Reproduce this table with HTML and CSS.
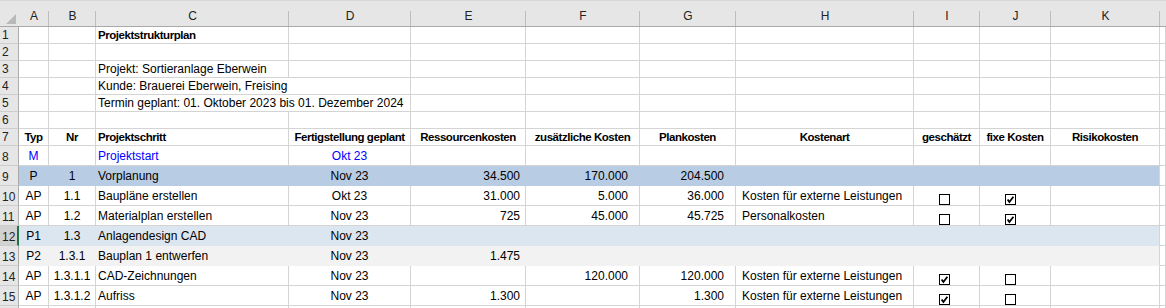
FILE: index.html
```html
<!DOCTYPE html>
<html lang="de">
<head>
<meta charset="utf-8">
<title>Projektstrukturplan</title>
<link rel="stylesheet" href="styles.css">
</head>
<body>
<div class="sheet">
  <div class="row hdr">
    <div class="corner"><svg width="18" height="25" viewBox="0 0 18 25"><polygon points="16,13 16,23 6,23" fill="#b9b9b9"/></svg></div>
    <div class="ch">A</div><div class="ch">B</div><div class="ch">C</div><div class="ch">D</div><div class="ch">E</div><div class="ch">F</div><div class="ch">G</div><div class="ch">H</div><div class="ch">I</div><div class="ch">J</div><div class="ch">K</div><div class="ch last"></div>
  </div>

  <div class="row r17">
    <div class="rh">1</div><div class="c"></div><div class="c"></div><div class="c l b">Projektstrukturplan</div><div class="c"></div><div class="c"></div><div class="c"></div><div class="c"></div><div class="c"></div><div class="c"></div><div class="c"></div><div class="c"></div><div class="c"></div>
  </div>
  <div class="row r17">
    <div class="rh">2</div><div class="c"></div><div class="c"></div><div class="c"></div><div class="c"></div><div class="c"></div><div class="c"></div><div class="c"></div><div class="c"></div><div class="c"></div><div class="c"></div><div class="c"></div><div class="c"></div>
  </div>
  <div class="row r17">
    <div class="rh">3</div><div class="c"></div><div class="c"></div><div class="c l">Projekt: Sortieranlage Eberwein</div><div class="c"></div><div class="c"></div><div class="c"></div><div class="c"></div><div class="c"></div><div class="c"></div><div class="c"></div><div class="c"></div><div class="c"></div>
  </div>
  <div class="row r17">
    <div class="rh">4</div><div class="c"></div><div class="c"></div><div class="c l span2">Kunde: Brauerei Eberwein, Freising</div><div class="c"></div><div class="c"></div><div class="c"></div><div class="c"></div><div class="c"></div><div class="c"></div><div class="c"></div><div class="c"></div>
  </div>
  <div class="row r17">
    <div class="rh">5</div><div class="c"></div><div class="c"></div><div class="c l span2">Termin geplant: 01. Oktober 2023 bis 01. Dezember 2024</div><div class="c"></div><div class="c"></div><div class="c"></div><div class="c"></div><div class="c"></div><div class="c"></div><div class="c"></div><div class="c"></div>
  </div>
  <div class="row r17">
    <div class="rh">6</div><div class="c"></div><div class="c"></div><div class="c"></div><div class="c"></div><div class="c"></div><div class="c"></div><div class="c"></div><div class="c"></div><div class="c"></div><div class="c"></div><div class="c"></div><div class="c"></div>
  </div>
  <div class="row r17 bold">
    <div class="rh">7</div><div class="c m">Typ</div><div class="c m">Nr</div><div class="c l">Projektschritt</div><div class="c m">Fertigstellung geplant</div><div class="c m">Ressourcenkosten</div><div class="c m">zusätzliche Kosten</div><div class="c m">Plankosten</div><div class="c m">Kostenart</div><div class="c m">geschätzt</div><div class="c m">fixe Kosten</div><div class="c m">Risikokosten</div><div class="c"></div>
  </div>

  <div class="row r20 blue">
    <div class="rh">8</div><div class="c m">M</div><div class="c m"></div><div class="c l">Projektstart</div><div class="c m">Okt 23</div><div class="c"></div><div class="c"></div><div class="c"></div><div class="c"></div><div class="c"></div><div class="c"></div><div class="c"></div><div class="c"></div>
  </div>
  <div class="row r20 fill-p">
    <div class="rh">9</div><div class="c m">P</div><div class="c m">1</div><div class="c l">Vorplanung</div><div class="c m">Nov 23</div><div class="c re">34.500</div><div class="c rf">170.000</div><div class="c rf">204.500</div><div class="c"></div><div class="c"></div><div class="c"></div><div class="c k"></div><div class="c plain"></div>
  </div>
  <div class="row r20">
    <div class="rh">10</div><div class="c m">AP</div><div class="c m">1.1</div><div class="c l">Baupläne erstellen</div><div class="c m">Okt 23</div><div class="c re">31.000</div><div class="c rf">5.000</div><div class="c rf">36.000</div><div class="c h">Kosten für externe Leistungen</div>
    <div class="c cb"><span class="box"></span></div>
    <div class="c cb"><span class="box"><svg width="9" height="9" viewBox="0 0 9 9"><path d="M1.6 4.4 L3.4 7 L7.4 1.8" fill="none" stroke="#000" stroke-width="1.8"/></svg></span></div>
    <div class="c"></div><div class="c"></div>
  </div>
  <div class="row r20">
    <div class="rh">11</div><div class="c m">AP</div><div class="c m">1.2</div><div class="c l">Materialplan erstellen</div><div class="c m">Nov 23</div><div class="c re">725</div><div class="c rf">45.000</div><div class="c rf">45.725</div><div class="c h">Personalkosten</div>
    <div class="c cb"><span class="box"></span></div>
    <div class="c cb"><span class="box"><svg width="9" height="9" viewBox="0 0 9 9"><path d="M1.6 4.4 L3.4 7 L7.4 1.8" fill="none" stroke="#000" stroke-width="1.8"/></svg></span></div>
    <div class="c"></div><div class="c"></div>
  </div>
  <div class="row r20 fill-p1">
    <div class="rh sel">12</div><div class="c m">P1</div><div class="c m">1.3</div><div class="c l">Anlagendesign CAD</div><div class="c m">Nov 23</div><div class="c"></div><div class="c"></div><div class="c"></div><div class="c"></div><div class="c"></div><div class="c"></div><div class="c k"></div><div class="c plain"></div>
  </div>
  <div class="row r20 fill-p2">
    <div class="rh">13</div><div class="c m">P2</div><div class="c m">1.3.1</div><div class="c l">Bauplan 1 entwerfen</div><div class="c m">Nov 23</div><div class="c re">1.475</div><div class="c"></div><div class="c"></div><div class="c"></div><div class="c"></div><div class="c"></div><div class="c k"></div><div class="c plain"></div>
  </div>
  <div class="row r20">
    <div class="rh">14</div><div class="c m">AP</div><div class="c m">1.3.1.1</div><div class="c l">CAD-Zeichnungen</div><div class="c m">Nov 23</div><div class="c re"></div><div class="c rf">120.000</div><div class="c rf">120.000</div><div class="c h">Kosten für externe Leistungen</div>
    <div class="c cb"><span class="box"><svg width="9" height="9" viewBox="0 0 9 9"><path d="M1.6 4.4 L3.4 7 L7.4 1.8" fill="none" stroke="#000" stroke-width="1.8"/></svg></span></div>
    <div class="c cb"><span class="box"></span></div>
    <div class="c"></div><div class="c"></div>
  </div>
  <div class="row r20">
    <div class="rh">15</div><div class="c m">AP</div><div class="c m">1.3.1.2</div><div class="c l">Aufriss</div><div class="c m">Nov 23</div><div class="c re">1.300</div><div class="c rf"></div><div class="c rf">1.300</div><div class="c h">Kosten für externe Leistungen</div>
    <div class="c cb"><span class="box"><svg width="9" height="9" viewBox="0 0 9 9"><path d="M1.6 4.4 L3.4 7 L7.4 1.8" fill="none" stroke="#000" stroke-width="1.8"/></svg></span></div>
    <div class="c cb"><span class="box"></span></div>
    <div class="c"></div><div class="c"></div>
  </div>
  <div class="row r20">
    <div class="rh"></div><div class="c"></div><div class="c"></div><div class="c"></div><div class="c"></div><div class="c"></div><div class="c"></div><div class="c"></div><div class="c"></div><div class="c"></div><div class="c"></div><div class="c"></div><div class="c"></div>
  </div>
</div>
</body>
</html>
```

FILE: styles.css
```css
html, body {
  margin: 0;
  padding: 0;
  background: #fff;
  overflow: hidden;
}
body {
  font-family: "Liberation Sans", Arial, sans-serif;
  font-size: 12px;
  color: #000;
}
.sheet {
  width: 1166px;
}
.row {
  display: grid;
  grid-template-columns: 19px 30px 47px 193px 122px 115px 114px 96px 178px 66px 71px 109px 1fr;
}
.r17 { height: 17px; }
.r20 { height: 20px; }

.hdr {
  height: 27px;
  box-sizing: border-box;
  border-top: 1px solid #d6d6d6;
  border-bottom: 1px solid #a9a9a9;
  background: #e6e6e6;
}
.corner {
  border-right: 1px solid #e6e6e6;
  box-sizing: border-box;
  display: flex;
}
.ch {
  display: flex;
  align-items: flex-end;
  justify-content: center;
  padding-bottom: 3px;
  box-sizing: border-box;
  color: #222;
  background: linear-gradient(#bdbdbd, #bdbdbd) right bottom / 1px 15px no-repeat;
}
.ch.last { background: none; }

.rh {
  background: #e6e6e6;
  border-right: 1px solid #ababab;
  border-bottom: 1px solid #cdcdcd;
  box-sizing: border-box;
  display: flex;
  align-items: flex-end;
  padding: 0 0 1px 2px;
  color: #222;
  line-height: 14px;
}
.rh.sel {
  background: #d2d2d2;
  border-right: 2px solid #217346;
  color: #1f1f1f;
}

.c {
  box-sizing: border-box;
  border-right: 1px solid #d4d4d4;
  border-bottom: 1px solid #d4d4d4;
  display: flex;
  align-items: center;
  white-space: nowrap;
  min-width: 0;
}
.c.l { padding-left: 2px; }
.c.m { justify-content: center; }
.c.re { justify-content: flex-end; padding-right: 5px; }
.c.rf { justify-content: flex-end; padding-right: 11px; }
.c.h { padding-left: 6px; }
.c.b,
.bold .c {
  font-weight: bold;
  font-size: 11.5px;
  letter-spacing: -0.45px;
}
.span2 { grid-column: span 2; }

.blue .c { color: #0000ff; }

.fill-p .c { background: #b8cce4; border-color: #b8cce4; }
.fill-p1 .c { background: #dce6f1; border-color: #dce6f1; }
.fill-p2 .c { background: #f2f2f2; border-color: #f2f2f2; }
.row .c.k { border-right-color: #d4d4d4; }
.row .c.plain { background: #fff; border-color: #d4d4d4; }

.c.cb {
  align-items: flex-end;
  padding: 0 0 0 25px;
}
.box {
  width: 11px;
  height: 11px;
  box-sizing: border-box;
  border: 1px solid #000;
  background: #fff;
  display: flex;
  align-items: center;
  justify-content: center;
}
.box svg { display: block; }
```
